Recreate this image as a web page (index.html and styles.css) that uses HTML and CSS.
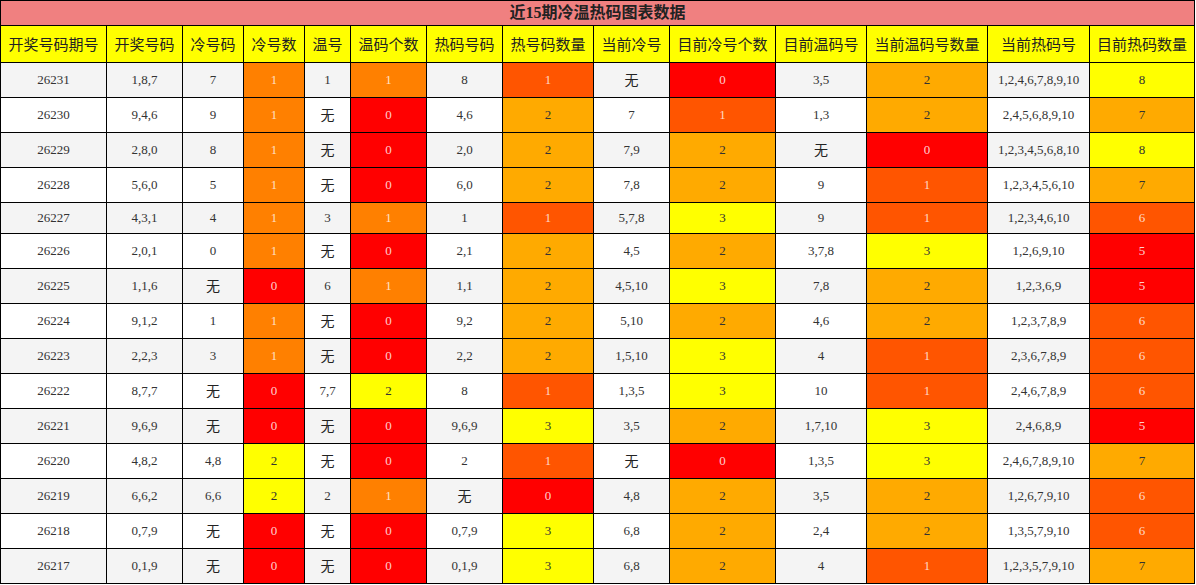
FILE: index.html
```html
<!DOCTYPE html>
<html lang="zh-CN">
<head>
<meta charset="utf-8">
<title>近15期冷温热码图表数据</title>
<link rel="stylesheet" href="styles.css">
</head>
<body>
<table class="grid">
<colgroup>
<col class="w106"><col class="w76"><col class="w61"><col class="w61"><col class="w46"><col class="w76"><col class="w76"><col class="w91"><col class="w76"><col class="w106"><col class="w91"><col class="w121"><col class="w102"><col class="w105">
</colgroup>
<thead>
<tr class="title"><th colspan="14">近15期冷温热码图表数据</th></tr>
<tr class="head"><th>开奖号码期号</th><th>开奖号码</th><th>冷号码</th><th>冷号数</th><th>温号</th><th>温码个数</th><th>热码号码</th><th>热号码数量</th><th>当前冷号</th><th>目前冷号个数</th><th>目前温码号</th><th>当前温码号数量</th><th>当前热码号</th><th>目前热码数量</th></tr>
</thead>
<tbody>
<tr class="alt"><td>26231</td><td>1,8,7</td><td>7</td><td class="or1">1</td><td>1</td><td class="or1">1</td><td>8</td><td class="or2">1</td><td><span class="none">无</span></td><td class="red">0</td><td>3,5</td><td class="or3">2</td><td>1,2,4,6,7,8,9,10</td><td class="yel">8</td></tr>
<tr><td>26230</td><td>9,4,6</td><td>9</td><td class="or1">1</td><td><span class="none">无</span></td><td class="red">0</td><td>4,6</td><td class="or3">2</td><td>7</td><td class="or2">1</td><td>1,3</td><td class="or3">2</td><td>2,4,5,6,8,9,10</td><td class="or3">7</td></tr>
<tr class="alt"><td>26229</td><td>2,8,0</td><td>8</td><td class="or1">1</td><td><span class="none">无</span></td><td class="red">0</td><td>2,0</td><td class="or3">2</td><td>7,9</td><td class="or3">2</td><td><span class="none">无</span></td><td class="red">0</td><td>1,2,3,4,5,6,8,10</td><td class="yel">8</td></tr>
<tr><td>26228</td><td>5,6,0</td><td>5</td><td class="or1">1</td><td><span class="none">无</span></td><td class="red">0</td><td>6,0</td><td class="or3">2</td><td>7,8</td><td class="or3">2</td><td>9</td><td class="or2">1</td><td>1,2,3,4,5,6,10</td><td class="or3">7</td></tr>
<tr class="alt short"><td>26227</td><td>4,3,1</td><td>4</td><td class="or1">1</td><td>3</td><td class="or1">1</td><td>1</td><td class="or2">1</td><td>5,7,8</td><td class="yel">3</td><td>9</td><td class="or2">1</td><td>1,2,3,4,6,10</td><td class="or2">6</td></tr>
<tr><td>26226</td><td>2,0,1</td><td>0</td><td class="or1">1</td><td><span class="none">无</span></td><td class="red">0</td><td>2,1</td><td class="or3">2</td><td>4,5</td><td class="or3">2</td><td>3,7,8</td><td class="yel">3</td><td>1,2,6,9,10</td><td class="red">5</td></tr>
<tr class="alt"><td>26225</td><td>1,1,6</td><td><span class="none">无</span></td><td class="red">0</td><td>6</td><td class="or1">1</td><td>1,1</td><td class="or3">2</td><td>4,5,10</td><td class="yel">3</td><td>7,8</td><td class="or3">2</td><td>1,2,3,6,9</td><td class="red">5</td></tr>
<tr><td>26224</td><td>9,1,2</td><td>1</td><td class="or1">1</td><td><span class="none">无</span></td><td class="red">0</td><td>9,2</td><td class="or3">2</td><td>5,10</td><td class="or3">2</td><td>4,6</td><td class="or3">2</td><td>1,2,3,7,8,9</td><td class="or2">6</td></tr>
<tr class="alt"><td>26223</td><td>2,2,3</td><td>3</td><td class="or1">1</td><td><span class="none">无</span></td><td class="red">0</td><td>2,2</td><td class="or3">2</td><td>1,5,10</td><td class="yel">3</td><td>4</td><td class="or2">1</td><td>2,3,6,7,8,9</td><td class="or2">6</td></tr>
<tr><td>26222</td><td>8,7,7</td><td><span class="none">无</span></td><td class="red">0</td><td>7,7</td><td class="yel">2</td><td>8</td><td class="or2">1</td><td>1,3,5</td><td class="yel">3</td><td>10</td><td class="or2">1</td><td>2,4,6,7,8,9</td><td class="or2">6</td></tr>
<tr class="alt"><td>26221</td><td>9,6,9</td><td><span class="none">无</span></td><td class="red">0</td><td><span class="none">无</span></td><td class="red">0</td><td>9,6,9</td><td class="yel">3</td><td>3,5</td><td class="or3">2</td><td>1,7,10</td><td class="yel">3</td><td>2,4,6,8,9</td><td class="red">5</td></tr>
<tr><td>26220</td><td>4,8,2</td><td>4,8</td><td class="yel">2</td><td><span class="none">无</span></td><td class="red">0</td><td>2</td><td class="or2">1</td><td><span class="none">无</span></td><td class="red">0</td><td>1,3,5</td><td class="yel">3</td><td>2,4,6,7,8,9,10</td><td class="or3">7</td></tr>
<tr class="alt"><td>26219</td><td>6,6,2</td><td>6,6</td><td class="yel">2</td><td>2</td><td class="or1">1</td><td><span class="none">无</span></td><td class="red">0</td><td>4,8</td><td class="or3">2</td><td>3,5</td><td class="or3">2</td><td>1,2,6,7,9,10</td><td class="or2">6</td></tr>
<tr><td>26218</td><td>0,7,9</td><td><span class="none">无</span></td><td class="red">0</td><td><span class="none">无</span></td><td class="red">0</td><td>0,7,9</td><td class="yel">3</td><td>6,8</td><td class="or3">2</td><td>2,4</td><td class="or3">2</td><td>1,3,5,7,9,10</td><td class="or2">6</td></tr>
<tr class="alt"><td>26217</td><td>0,1,9</td><td><span class="none">无</span></td><td class="red">0</td><td><span class="none">无</span></td><td class="red">0</td><td>0,1,9</td><td class="yel">3</td><td>6,8</td><td class="or3">2</td><td>4</td><td class="or2">1</td><td>1,2,3,5,7,9,10</td><td class="or3">7</td></tr>
</tbody>
</table>
</body>
</html>
```

FILE: styles.css
```css
html, body {
  margin: 0;
  padding: 0;
  background: #ffffff;
}

.grid {
  border-collapse: collapse;
  table-layout: fixed;
  width: 1195px;
  font-family: "Liberation Serif", "Noto Sans CJK SC", serif;
  font-size: 13px;
  color: #333333;
}

.w46 { width: 46px; }
.w61 { width: 61px; }
.w76 { width: 76px; }
.w91 { width: 91px; }
.w102 { width: 102px; }
.w105 { width: 105px; }
.w106 { width: 106px; }
.w121 { width: 121px; }

.grid th,
.grid td {
  border: 1px solid #000000;
  padding: 0;
  text-align: center;
  vertical-align: middle;
  white-space: nowrap;
  overflow: hidden;
}

.title th {
  background: #f08080;
  color: #222222;
  font-family: "Liberation Serif", "Noto Sans CJK SC", serif;
  font-size: 16px;
  font-weight: bold;
  line-height: 24px;
  height: 24px;
}

.head th {
  background: #ffff00;
  color: #222222;
  font-family: "Noto Sans CJK SC", sans-serif;
  font-size: 15px;
  font-weight: normal;
  line-height: 36px;
  height: 36px;
}

.grid td {
  line-height: 34px;
  height: 34px;
  background: #ffffff;
}

.grid tr.alt td {
  background: #f4f4f4;
}

.grid tr.short td {
  line-height: 30px;
  height: 30px;
}

.none {
  font-family: "Noto Sans CJK SC", sans-serif;
  font-size: 14px;
  line-height: 14px;
  color: #222222;
  position: relative;
  top: 1px;
}

.grid tr td.red { background: #ff0000; color: rgba(255, 255, 255, 0.82); }
.grid tr td.or1 { background: #ff8000; color: rgba(255, 255, 255, 0.78); }
.grid tr td.or2 { background: #ff5500; color: rgba(255, 255, 255, 0.78); }
.grid tr td.or3 { background: #ffaa00; color: #333333; }
.grid tr td.yel { background: #ffff00; color: #333333; }
```
